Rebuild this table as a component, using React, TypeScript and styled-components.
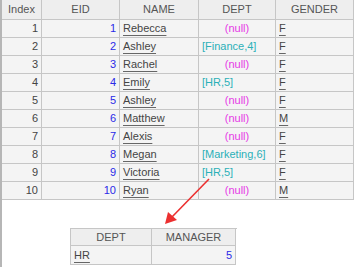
import React from 'react';
import styled, { createGlobalStyle } from 'styled-components';

interface Employee {
  index: number;
  eid: number;
  name: string;
  dept: string | null;
  gender: string;
}

const employees: Employee[] = [
  { index: 1, eid: 1, name: 'Rebecca', dept: null, gender: 'F' },
  { index: 2, eid: 2, name: 'Ashley', dept: '[Finance,4]', gender: 'F' },
  { index: 3, eid: 3, name: 'Rachel', dept: null, gender: 'F' },
  { index: 4, eid: 4, name: 'Emily', dept: '[HR,5]', gender: 'F' },
  { index: 5, eid: 5, name: 'Ashley', dept: null, gender: 'F' },
  { index: 6, eid: 6, name: 'Matthew', dept: null, gender: 'M' },
  { index: 7, eid: 7, name: 'Alexis', dept: null, gender: 'F' },
  { index: 8, eid: 8, name: 'Megan', dept: '[Marketing,6]', gender: 'F' },
  { index: 9, eid: 9, name: 'Victoria', dept: '[HR,5]', gender: 'F' },
  { index: 10, eid: 10, name: 'Ryan', dept: null, gender: 'M' },
];

const GlobalStyle = createGlobalStyle`
  html, body {
    margin: 0;
    padding: 0;
    background: #ffffff;
  }
  body {
    font-family: "Liberation Sans", Arial, sans-serif;
    font-size: 11px;
  }
`;

const Page = styled.div`
  position: relative;
  height: 267px;
  border-left: 2px solid #b6b6b6;
  overflow: hidden;
`;

const Grid = styled.div<{ $cols: string }>`
  display: grid;
  grid-template-columns: ${(p) => p.$cols};
`;

const MainGrid = styled(Grid)`
  width: 352px;
`;

const SubGrid = styled(Grid)`
  width: 166px;
  margin: 28px 0 0 68px;
  border-top: 1px solid #c6c6c6;
  border-left: 1px solid #c6c6c6;
`;

const HeadCell = styled.div<{ $h: number }>`
  height: ${(p) => p.$h}px;
  line-height: ${(p) => p.$h}px;
  background: #eeeeee;
  color: #555555;
  text-align: center;
  border-right: 1px solid #c6c6c6;
  border-bottom: 1px solid #c6c6c6;
  white-space: nowrap;
  overflow: hidden;
`;

const Cell = styled.div<{ $align?: 'left' | 'right' | 'center'; $h?: number }>`
  height: ${(p) => p.$h ?? 17}px;
  line-height: ${(p) => p.$h ?? 17}px;
  background: #f4f4f4;
  color: #444444;
  text-align: ${(p) => p.$align ?? 'left'};
  padding: 0 3px;
  border-right: 1px solid #c6c6c6;
  border-bottom: 1px solid #c6c6c6;
  white-space: nowrap;
  overflow: hidden;
`;

const Num = styled.span`
  color: #2a2ae8;
`;

const Linked = styled.span`
  color: #444444;
  text-decoration: underline;
  text-decoration-color: #666666;
  text-underline-offset: 3px;
  text-decoration-thickness: 1px;
`;

const Null = styled.span`
  color: #e63ae6;
`;

const Record = styled.span`
  color: #2bb0b8;
`;

const Arrow = styled.svg`
  position: absolute;
  left: 0;
  top: 0;
  pointer-events: none;
`;

export default function App() {
  return (
    <>
      <GlobalStyle />
      <Page>
        <MainGrid $cols="40px 78px 79px 77px 78px">
          <HeadCell $h={19}>Index</HeadCell>
          <HeadCell $h={19}>EID</HeadCell>
          <HeadCell $h={19}>NAME</HeadCell>
          <HeadCell $h={19}>DEPT</HeadCell>
          <HeadCell $h={19}>GENDER</HeadCell>
          {employees.map((e) => (
            <React.Fragment key={e.index}>
              <Cell $align="right">{e.index}</Cell>
              <Cell $align="right">
                <Num>{e.eid}</Num>
              </Cell>
              <Cell>
                <Linked>{e.name}</Linked>
              </Cell>
              {e.dept ? (
                <Cell>
                  <Record>{e.dept}</Record>
                </Cell>
              ) : (
                <Cell $align="center">
                  <Null>(null)</Null>
                </Cell>
              )}
              <Cell>
                <Linked>{e.gender}</Linked>
              </Cell>
            </React.Fragment>
          ))}
        </MainGrid>

        <SubGrid $cols="81px 84px">
          <HeadCell $h={16}>DEPT</HeadCell>
          <HeadCell $h={16}>MANAGER</HeadCell>
          <Cell $h={18}>
            <Linked>HR</Linked>
          </Cell>
          <Cell $h={18} $align="right">
            <Num>5</Num>
          </Cell>
        </SubGrid>

        <Arrow width="356" height="267" viewBox="-2 0 356 267">
          <line x1="205" y1="179" x2="167" y2="218" stroke="#ec3030" strokeWidth="1.6" />
          <polygon points="161,224 164,212 173,220" fill="#ec3030" />
        </Arrow>
      </Page>
    </>
  );
}
